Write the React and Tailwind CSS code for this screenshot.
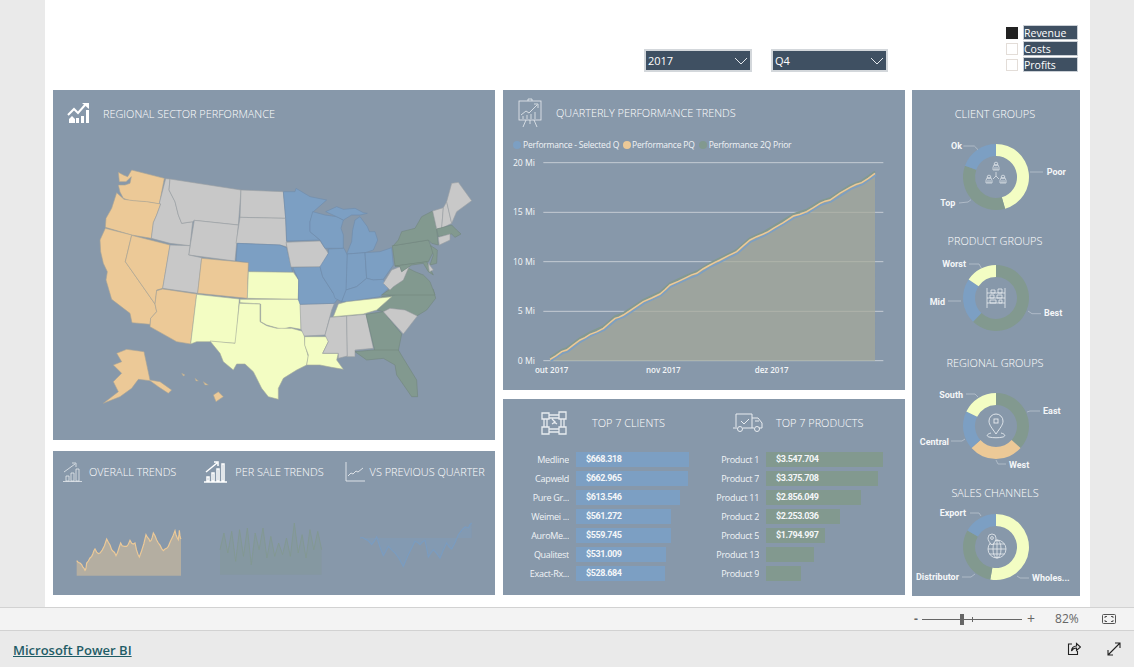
const PANEL = 'bg-[#8798AA]'
const C = { orange: '#ECC997', gray: '#C8C8C8', blue: '#7C9FC3', green: '#82998F', yellow: '#F3FDC3' }
const EDGE = { orange: '#A9A595', gray: '#9A9FA3', blue: '#6E8CAB', green: '#72877D', yellow: '#A6AD9C' }

// map outlines, in 3x coordinates taken off the reference
const STATES = [
  ['orange', '355,277 372,286 383,290 395,270 493,295 478,372 450,367 390,362 370,355 360,336 355,315 375,315 390,310 394,290 378,305 358,305'],
  ['orange', '350,338 372,358 400,362 440,365 482,372 470,405 460,428 454,475 395,465 316,442 318,415 335,385'],
  ['orange', '316,445 395,465 376,545 465,672 470,695 452,715 450,733 396,728 390,700 335,658 318,600 322,575 310,550 302,515 300,480'],
  ['orange', '395,466 510,495 488,625 470,630 465,672 376,545'],
  ['gray', '497,296 510,297 507,330 525,365 535,405 545,430 578,425 570,497 510,490 454,475 460,428 470,405 482,372 478,370'],
  ['gray', '510,297 723,330 715,435 583,421 578,425 545,430 535,405 525,365 507,330'],
  ['gray', '583,421 715,435 705,543 566,525'],
  ['gray', '723,330 850,335 857,415 720,412'],
  ['gray', '720,412 857,415 860,500 840,495 708,490'],
  ['blue', '712,490 840,495 860,503 878,577 745,575 745,548 708,543'],
  ['gray', '510,495 570,497 566,525 605,533 593,640 488,625'],
  ['orange', '605,535 745,548 742,655 593,640'],
  ['orange', '488,627 590,642 572,792 530,785 450,740 452,715 470,695 465,672 470,632'],
  ['yellow', '590,643 718,657 708,790 632,785 590,785 572,792'],
  ['yellow', '745,575 880,577 896,600 895,658 742,655'],
  ['yellow', '720,658 895,658 903,672 903,748 870,742 845,748 800,735 782,725 782,672 720,668'],
  ['yellow', '630,783 705,790 718,670 780,672 780,725 800,737 830,745 875,745 912,755 915,795 925,830 920,855 890,870 850,895 835,925 835,958 805,950 785,925 760,875 735,852 710,852 700,870 670,845 660,820'],
  ['yellow', '914,770 983,770 985,785 968,820 1015,820 1010,840 1030,868 995,862 960,855 920,855 925,825 914,795'],
  ['gray', '900,673 1003,670 995,690 975,765 913,768 903,748'],
  ['blue', '878,562 960,560 968,590 1000,640 1015,655 1003,670 900,673 895,658 896,600'],
  ['gray', '858,487 960,483 985,520 970,555 960,560 873,561'],
  ['blue', '850,335 885,335 888,325 930,350 980,360 940,395 930,425 930,455 960,480 860,483 857,415'],
  ['blue', '930,425 938,395 975,405 1010,410 1030,420 1023,445 1030,465 1030,505 975,505 960,480 930,455'],
  ['blue', '977,395 1010,380 1030,388 1065,385 1090,398 1102,400 1080,405 1055,405 1030,420 1010,410'],
  ['blue', '1058,450 1065,420 1080,410 1102,440 1108,455 1125,455 1133,480 1120,510 1095,518 1040,522 1055,485'],
  ['blue', '985,507 1032,505 1042,525 1040,630 1025,665 1005,655 1000,640 968,590 960,560 985,520'],
  ['blue', '1042,522 1095,518 1100,595 1070,620 1038,630'],
  ['blue', '1095,518 1140,515 1175,503 1180,555 1150,598 1120,600 1100,595'],
  ['blue', '1038,630 1070,620 1100,595 1120,600 1150,598 1165,625 1140,650 1040,665 1025,665'],
  ['gray', '990,712 1040,708 1042,828 1015,835 1015,820 968,820 985,785 975,765'],
  ['gray', '1040,708 1098,703 1120,805 1065,810 1065,830 1042,830'],
  ['green', '1098,703 1150,695 1205,762 1195,812 1125,815'],
  ['green', '1065,815 1120,810 1195,810 1210,835 1250,900 1253,950 1235,950 1190,885 1185,855 1150,835 1100,840'],
  ['green', '1145,650 1300,628 1307,655 1280,690 1250,708 1215,690 1170,685 1150,695 1130,690'],
  ['gray', '1150,695 1170,685 1215,690 1252,708 1210,762'],
  ['green', '1145,645 1180,620 1210,600 1225,565 1245,575 1270,585 1290,605 1305,645'],
  ['gray', '1150,610 1175,570 1200,560 1205,575 1230,555 1225,565 1210,600 1180,620 1170,630'],
  ['green', '1177,497 1285,480 1300,515 1285,545 1185,558'],
  ['green', '1180,497 1195,480 1205,455 1245,445 1265,410 1298,393 1310,447 1315,495 1295,490 1285,480'],
  ['green', '1292,497 1312,510 1310,550 1290,555 1300,525'],
  ['green', '1185,558 1280,545 1300,585 1285,575 1270,550 1235,555 1205,575 1200,560'],
  ['gray', '1285,550 1300,570 1288,575'],
  ['gray', '1298,393 1330,383 1325,445 1310,447'],
  ['gray', '1330,383 1340,365 1355,430 1325,445'],
  ['gray', '1355,310 1375,307 1415,362 1370,395 1355,430 1340,365'],
  ['green', '1310,447 1355,435 1370,450 1383,462 1365,472 1355,462 1315,470'],
  ['gray', '1315,472 1350,462 1350,480 1318,495'],
  ['yellow', '1040,665 1175,650 1130,690 1090,702 1000,710 1015,672'],
  ['orange', '350,820 380,808 432,815 450,900 480,905 515,930 505,940 475,920 450,902 415,898 395,925 360,950 310,970 355,935 340,905 350,895 365,880 340,855 365,845'],
  ['orange', '640,945 655,935 670,950 648,965'],
  ['orange', '545,880 555,885 550,888'],
  ['orange', '585,895 595,903 588,903'],
  ['orange', '610,905 625,915 615,915'],
]

const CLIENTS = [['Medline', '$668.318', 113], ['Capweld', '$662.965', 112], ['Pure Gr...', '$613.546', 104], ['Weimei ...', '$561.272', 95], ['AuroMe...', '$559.745', 95], ['Qualitest', '$531.009', 90], ['Exact-Rx...', '$528.684', 89]]
const PRODUCTS = [['Product 1', '$3.547.704', 117], ['Product 7', '$3.375.708', 112], ['Product 11', '$2.856.049', 95], ['Product 2', '$2.253.036', 74], ['Product 5', '$1.794.997', 59], ['Product 13', '', 48], ['Product 9', '', 35]]

const LINE = [[150,628],[185,605],[200,600],[240,570],[270,553],[310,535],[345,505],[370,495],[430,455],[480,432],[510,405],[560,382],[590,370],[630,345],[660,330],[710,305],[750,270],[790,252],[820,235],[880,198],[920,185],[960,160],[990,150],[1050,112],[1085,98],[1125,70]]
const ORANGE_SPARK = [[80,333],[95,345],[105,362],[110,340],[125,320],[135,298],[150,310],[170,268],[185,300],[198,318],[212,280],[225,290],[240,272],[255,280],[268,322],[288,255],[300,275],[310,250],[325,280],[340,303],[355,290],[375,243],[385,270],[388,242],[393,268]]
const BLUE_SPARK = [[930,265],[945,268],[965,285],[980,262],[1000,318],[1015,290],[1035,310],[1060,350],[1075,315],[1095,275],[1110,285],[1125,272],[1135,322],[1150,300],[1170,325],[1190,280],[1205,298],[1225,255],[1245,232],[1255,235],[1265,220]]
const GREEN_TOPS = [300,250,310,245,335,240,320,235,345,250,300,235,325,260,320,280,315,265,320,220,310,255,325,240,300,245,300]
const GREEN_SPARK = GREEN_TOPS.map((y, i) => [510 + (i * 305) / (GREEN_TOPS.length - 1), y])

const pts = (list, dx = 0, dy = 0) => list.map(([x, y]) => `${x + dx},${y + dy}`).join(' ')

// adds small steps between hand-picked points so the lines aren't too clean
function rough(list, steps, amp) {
  const out = []
  list.slice(0, -1).forEach(([x, y], i) => {
    const [nx, ny] = list[i + 1]
    for (let s = 0; s < steps; s++) {
      const t = s / steps
      const wob = s === 0 ? 0 : Math.sin((x + s) * 12.9898) * amp
      out.push([x + (nx - x) * t, y + (ny - y) * t + wob])
    }
  })
  out.push(list[list.length - 1])
  return out
}

const ORANGE_ROUGH = rough(ORANGE_SPARK, 3, 6)
const BLUE_ROUGH = rough(BLUE_SPARK, 2, 3)
const LINE_ROUGH = rough(LINE, 2, 1.5)

function arc(from, to, r1 = 33, r2 = 21) {
  const p = (a, r) => {
    const t = ((a - 90) * Math.PI) / 180
    return `${(r * Math.cos(t)).toFixed(2)} ${(r * Math.sin(t)).toFixed(2)}`
  }
  const big = to - from > 180 ? 1 : 0
  return `M${p(from, r1)}A${r1} ${r1} 0 ${big} 1 ${p(to, r1)}L${p(to, r2)}A${r2} ${r2} 0 ${big} 0 ${p(from, r2)}Z`
}

const PersonIcon = ({ x, y }) => (
  <g transform={`translate(${x} ${y})`}>
    <circle cx="0" cy="-3" r="1.8" />
    <path d="M-3 3v-2.5a3 3 0 0 1 6 0V3zM-1 3V0M1 3V0" />
  </g>
)

const CENTER_ICONS = {
  people: (
    <g fill="none" stroke="#E8ECF0" strokeWidth="0.7">
      <PersonIcon x={0} y={-10} />
      <PersonIcon x={-7} y={3} />
      <PersonIcon x={7} y={3} />
      <path d="M0 -5V-1L-3 2M0 -1L3 2" />
    </g>
  ),
  shelf: (
    <g fill="none" stroke="#E8ECF0" strokeWidth="0.8">
      <path d="M-9 -10V10M9 -10V10M-9 -5H9M-9 0H9M-9 5H9M-5 -8H-1V-5H-5zM1 -3H6V0H1zM-6 2H0V5H-6zM3 2H6V5H3zM2 -9H6V-5H2zM-6 -3H-2V0H-6z" />
    </g>
  ),
  pin: (
    <g fill="none" stroke="#E8ECF0" strokeWidth="0.9">
      <path d="M0 8C-4 2 -7 -1 -7 -5A7 7 0 0 1 7 -5C7 -1 4 2 0 8Z" />
      <rect x="-2" y="-7" width="4" height="4" />
      <path d="M-5 7C-9 8 -10 10 -7 11C-3 12 3 12 7 11C10 10 9 8 5 7" />
    </g>
  ),
  globe: (
    <g fill="none" stroke="#E8ECF0" strokeWidth="0.8">
      <circle cx="1" cy="2" r="9" />
      <ellipse cx="1" cy="2" rx="4" ry="9" />
      <path d="M-8 2H10M-6.5 -3H8.5M-6.5 7H8.5M1 -7V11" />
      <path d="M-4 -2C-7 -5 -8 -7 -8 -9A4 4 0 0 1 0 -9C0 -7 -1 -5 -4 -2Z" fill="#8798AA" />
      <circle cx="-4" cy="-9" r="1.4" />
    </g>
  ),
}

const DONUTS = [
  {
    title: 'CLIENT GROUPS', icon: 'people', wrap: 'mt-0', svg: 'mt-[13px]',
    segs: [[0, 164, 'yellow'], [164, 290, 'green'], [290, 360, 'blue']],
    labels: [
      ['Ok', -34, -31, 'end', '-32.7,-31 -21.7,-31 -18,-27.3'],
      ['Poor', 50.7, -5, 'start', '34,-5 47,-5'],
      ['Top', -40.7, 26, 'end', '-37,26 -28,25 -25,22.7'],
    ],
  },
  {
    title: 'PRODUCT GROUPS', icon: 'shelf', wrap: 'mt-[14px]', svg: 'mt-[7px]',
    segs: [[0, 224, 'green'], [224, 304, 'blue'], [304, 360, 'yellow']],
    labels: [
      ['Worst', -30, -34, 'end', '-27,-34 -17,-34 -14.7,-30'],
      ['Mid', -51, 3.7, 'end', '-48,3 -35,3'],
      ['Best', 48, 15, 'start', '32,13 36,15.7 45,15.7'],
    ],
  },
  {
    title: 'REGIONAL GROUPS', icon: 'pin', wrap: 'mt-[15px]', svg: 'mt-[13px]',
    segs: [[0, 132, 'green'], [132, 228, 'orange'], [228, 296, 'blue'], [296, 360, 'yellow']],
    labels: [
      ['South', -33, -31, 'end', '-30,-32 -21,-32 -18,-29'],
      ['East', 47, -15, 'start', '31,-14 34,-15 44,-15'],
      ['Central', -47, 16, 'end', '-45,15 -34,15 -31,13'],
      ['West', 13, 39, 'start', '0,34 2,38 10,38'],
    ],
  },
  {
    title: 'SALES CHANNELS', icon: 'globe', wrap: 'mt-[17px]', svg: 'mt-[4px]',
    segs: [[0, 190, 'yellow'], [190, 300, 'green'], [300, 360, 'blue']],
    labels: [
      ['Export', -30, -34, 'end', '-26,-34 -17,-34 -15,-31'],
      ['Distributor', -37, 30, 'end', '-34,30 -25,30 -21,27'],
      ['Wholes...', 36, 31, 'start', '21,29 24,31 33,31'],
    ],
  },
]

function Donut({ d }) {
  return (
    <div className={d.wrap}>
      <div className="flex h-5 items-center justify-center pr-[2px] text-[10.9px] font-light text-white">{d.title}</div>
      <svg viewBox="-84 -40 168 80" className={`block h-20 w-[168px] overflow-visible ${d.svg}`}>
        {d.segs.map(([a, b, c]) => (
          <path key={a} d={arc(a, b)} fill={C[c]} />
        ))}
        {d.labels.map(([t, x, y, anchor, line]) => (
          <g key={t}>
            <polyline points={line} fill="none" stroke="#B9C3CE" strokeWidth="0.8" />
            <text x={x} y={y + 3.2} textAnchor={anchor} fontSize="9" fontWeight="700" fill="#F4F6F8" fontFamily="Roboto, sans-serif">
              {t}
            </text>
          </g>
        ))}
        {CENTER_ICONS[d.icon]}
      </svg>
    </div>
  )
}

function BarRow({ label, value, width, labelClass, barClass }) {
  return (
    <div className="flex h-[19px] items-center gap-[7px]">
      <div className={`truncate text-right text-[9px] tracking-[-0.3px] text-[#F0F3F6] ${labelClass}`}>{label}</div>
      <div className={`flex h-[15px] items-center pl-[10px] ${barClass}`} style={{ width }}>
        <span className="font-['Roboto',sans-serif] text-[9px] font-bold tracking-[-0.4px] text-[#F4F6F8]">{value}</span>
      </div>
    </div>
  )
}

export default function App() {
  return (
    <div className="flex h-[667px] w-[1134px] flex-col overflow-hidden bg-[#EAEAEA] font-['Open_Sans',sans-serif]">
      <div className="ml-[45px] h-[607px] w-[1045px] bg-white pl-[8px]">
        {/* slicers */}
        <div className="relative flex h-[90px]">
          <div className="ml-[591px] mt-[49px] flex h-[23px] w-[108px] items-center justify-between border-2 border-[#D3D7DB] bg-[#3F5062] pl-[2px] pr-[1px] pt-[1px] text-[11px] text-white">
            2017
            <svg width="16" height="10" viewBox="0 0 16 10" fill="none" stroke="#E6EAEE" strokeWidth="1"><path d="M2 2l6 6 6-6" /></svg>
          </div>
          <div className="ml-[19px] mt-[49px] flex h-[23px] w-[117px] items-center justify-between border-2 border-[#D3D7DB] bg-[#3F5062] pl-[2px] pr-[1px] pt-[1px] text-[11px] text-white">
            Q4
            <svg width="16" height="10" viewBox="0 0 16 10" fill="none" stroke="#E6EAEE" strokeWidth="1"><path d="M2 2l6 6 6-6" /></svg>
          </div>
          <div className="ml-[118px] mt-[25px] flex w-[73px] flex-col gap-px">
            {['Revenue', 'Costs', 'Profits'].map((t, i) => (
              <div key={t} className="flex h-[15px] items-center gap-[5px]">
                <span className={`h-3 w-3 border ${i === 0 ? 'border-[#222222] bg-[#222222]' : 'border-[#E3DDD8] bg-white'}`} />
                <span className="flex h-[15px] w-[55px] items-center border border-[#CBD0D6] bg-[#3F5062] pt-[2px] text-[10.5px] leading-none text-white">{t}</span>
              </div>
            ))}
          </div>
        </div>

        <div className="flex">
          {/* left column */}
          <div className="mr-[8px] flex w-[442px] flex-col gap-[11px]">
            <div className={`h-[350px] ${PANEL}`}>
              <div className="flex h-[70px] items-start pl-[14px] pt-[12px]">
                <svg width="24" height="22" viewBox="0 0 24 22" className="shrink-0">
                  <g fill="#FFFFFF">
                    <path d="M2 21v-4l3-3 3 3v4zM9 21v-5h3v5zM14 21v-7h3v7zM19 21V8h3v13z" />
                  </g>
                  <path d="M1 13l6-6 4 4 7-8" fill="none" stroke="#FFFFFF" strokeWidth="2" />
                  <path d="M15 1h7v6z" fill="#FFFFFF" />
                </svg>
                <span className="ml-[12px] mt-[4px] text-[10.9px] font-light text-white">REGIONAL SECTOR PERFORMANCE</span>
              </div>
              <svg viewBox="240 240 1200 780" className="ml-[27px] block h-[260px] w-[400px]">
                {STATES.map(([c, p], i) => (
                  <polygon key={i} points={p} fill={C[c]} stroke={EDGE[c]} strokeWidth="1.8" strokeLinejoin="round" />
                ))}
              </svg>
            </div>
            <div className={`h-[144px] ${PANEL}`}>
              <div className="flex h-[42px] items-center whitespace-nowrap text-[10.9px] font-light text-white">
                <svg width="20" height="22" viewBox="0 0 20 22" fill="none" stroke="#E6EAEE" strokeWidth="0.8" className="ml-[10px] shrink-0">
                  <path d="M0 20.500h19M3 20v-5h3v5zM8 20v-8h3v8zM13 20V8h3v12zM1 11L12 3M9 2h4v4" />
                </svg>
                <span className="ml-[6px]">OVERALL TRENDS</span>
                <svg width="23" height="22" viewBox="0 0 23 22" fill="none" stroke="#FFFFFF" strokeWidth="1.5" className="ml-[28px] shrink-0">
                  <path d="M0 21h23M3 20v-4h2v4zM8 20v-8h2v8zM13 20V8h2v12zM18 20V3h2v17zM2 11L13 2M10 1h4v4" />
                </svg>
                <span className="ml-[8px]">PER SALE TRENDS</span>
                <svg width="20" height="20" viewBox="0 0 20 20" fill="none" stroke="#E6EAEE" strokeWidth="0.9" className="ml-[21px] shrink-0">
                  <path d="M1 0v19h19M3 14l3-3 2 1 3-3 2 1 5-4" />
                </svg>
                <span className="ml-[5px]">VS PREVIOUS QUARTER</span>
              </div>
              <svg viewBox="9 130 1326 306" className="block h-[102px] w-[442px]">
                <polygon points={`80,378 ${pts(ORANGE_ROUGH)} 393,378`} fill={C.orange} fillOpacity="0.45" />
                <polyline points={pts(ORANGE_ROUGH)} fill="none" stroke={C.orange} strokeWidth="3.5" />
                <polygon points={`510,375 ${pts(GREEN_SPARK)} 815,375`} fill={C.green} fillOpacity="0.3" />
                <polyline points={pts(GREEN_SPARK)} fill="none" stroke={C.green} strokeOpacity="0.8" strokeWidth="3" />
                <polygon points={`930,265 ${pts(BLUE_ROUGH)} 1265,265`} fill={C.blue} fillOpacity="0.35" />
                <polyline points={pts(BLUE_ROUGH)} fill="none" stroke="#7A9CC0" strokeWidth="3.5" />
              </svg>
            </div>
          </div>

          {/* middle column */}
          <div className="mr-[7px] flex w-[402px] flex-col gap-[9px]">
            <div className={`h-[300px] ${PANEL}`}>
              <div className="flex h-[46px] items-center pl-[15px]">
                <svg width="24" height="30" viewBox="0 0 24 30" fill="none" stroke="#E8ECF0" strokeWidth="0.8">
                  <rect x="1" y="3" width="22" height="19" />
                  <path d="M10 3V1h4v2M8 22l-3 7M16 22l3 7M12 22v4M3 17l5-4 3 2 8-8M16 6h4v4M5 21v-3M9 21v-4M13 21v-5M17 21v-7" />
                </svg>
                <span className="ml-[14px] text-[10.9px] font-light text-white">QUARTERLY PERFORMANCE TRENDS</span>
              </div>
              <div className="flex h-[14px] items-center pl-[10px] pt-[4px] text-[8.5px] tracking-[-0.2px] text-[#F0F3F6]">
                <span className="h-2 w-2 rounded-full bg-[#7C9FC3]" />
                <span className="ml-[2px]">Performance - Selected Q</span>
                <span className="ml-[4px] h-2 w-2 rounded-full bg-[#ECC997]" />
                <span className="ml-px">Performance PQ</span>
                <span className="ml-[4px] h-2 w-2 rounded-full bg-[#82998F]" />
                <span className="ml-[2px]">Performance 2Q Prior</span>
              </div>
              <svg viewBox="9 0 1206 690" className="block h-[230px] w-[402px]">
                {[['20 Mi', 38], ['15 Mi', 187], ['10 Mi', 335], ['5 Mi', 484], ['0 Mi', 632]].map(([t, y]) => (
                  <g key={t}>
                    <line x1="130" x2="1150" y1={y} y2={y} stroke="#C4CBD3" strokeWidth="3" />
                    <text x="105" y={y + 9} textAnchor="end" fontSize="26" fill="#F4F6F8" fontFamily="Open Sans, sans-serif">{t}</text>
                  </g>
                ))}
                <polygon points={`150,632 ${pts(LINE, 0, -6)} 1125,632`} fill={C.green} fillOpacity="0.55" />
                <polygon points={`150,632 ${pts(LINE, 3, 5)} 1125,632`} fill={C.blue} fillOpacity="0.12" />
                <polygon points={`150,632 ${pts(LINE)} 1125,632`} fill={C.orange} fillOpacity="0.25" />
                <polyline points={pts(LINE, 0, -6)} fill="none" stroke={C.green} strokeWidth="5" />
                <polyline points={pts(LINE, 3, 5)} fill="none" stroke={C.blue} strokeWidth="5" />
                <polyline points={pts(LINE_ROUGH)} fill="none" stroke={C.orange} strokeWidth="4.5" />
                {[['out 2017', 155], ['nov 2017', 490], ['dez 2017', 815]].map(([t, x]) => (
                  <text key={t} x={x} y="669" textAnchor="middle" fontSize="24" fontWeight="600" fill="#F4F6F8" fontFamily="Open Sans, sans-serif">{t}</text>
                ))}
              </svg>
            </div>
            <div className={`flex h-[196px] ${PANEL}`}>
              <div className="w-[200px]">
                <div className="flex h-[48px] items-center pl-[37px]">
                  <svg width="28" height="26" viewBox="0 0 28 26" fill="none" stroke="#E8ECF0" strokeWidth="1.3">
                    <path d="M2 3h7v6H2zM19 2h7v7h-7zM2 17h7v7H2zM19 17h7v7h-7zM9 5h10v3H9zM9 19h10v3H9zM4 9v8h3V9zM21 9v8h3V9zM12 9l3 3-3 2M17 14l-3-2" />
                  </svg>
                  <span className="ml-[24px] text-[10.9px] font-light text-white">TOP 7 CLIENTS</span>
                </div>
                <div className="mt-[3px]">
                  {CLIENTS.map(([l, v, w]) => (
                    <BarRow key={l} label={l} value={v} width={w} labelClass="w-[66px]" barClass="bg-[#7C9FC3]" />
                  ))}
                </div>
              </div>
              <div className="flex-1">
                <div className="flex h-[48px] items-center pl-[30px]">
                  <svg width="30" height="20" viewBox="0 0 30 20" fill="none" stroke="#E8ECF0" strokeWidth="1">
                    <path d="M3 14V1h16v14M19 5h6l4 5v5h-3M0 15h4M10 15h11M8 8l3 3 5-5M22 8h4" />
                    <circle cx="7" cy="16" r="2.5" />
                    <circle cx="24" cy="16" r="2.5" />
                  </svg>
                  <span className="ml-[13px] text-[10.9px] font-light text-white">TOP 7 PRODUCTS</span>
                </div>
                <div className="mt-[3px]">
                  {PRODUCTS.map(([l, v, w]) => (
                    <BarRow key={l} label={l} value={v} width={w} labelClass="w-[56px]" barClass="bg-[#82998F]" />
                  ))}
                </div>
              </div>
            </div>
          </div>

          {/* right column */}
          <div className={`h-[506px] w-[168px] pt-[14px] ${PANEL}`}>
            {DONUTS.map((d) => (
              <Donut key={d.title} d={d} />
            ))}
          </div>
        </div>
      </div>

      {/* zoom bar */}
      <div className="flex h-[24px] items-center border-y border-[#D2D2D2] bg-[#F3F3F3] text-[12px] text-[#666666]">
        <span className="ml-[913px] w-[6px] text-center font-bold leading-none">-</span>
        <div className="relative ml-[3px] h-px w-[100px] bg-[#666666]">
          <span className="absolute left-[38px] top-[-5px] h-[11px] w-[4px] bg-[#666666]" />
          <span className="absolute left-[50px] top-[-2px] h-[5px] w-px bg-[#666666]" />
        </div>
        <span className="ml-[5px] text-[14px] leading-none">+</span>
        <span className="ml-[20px]">82%</span>
        <svg width="14" height="10" viewBox="0 0 14 10" fill="none" stroke="#555555" className="ml-[23px]">
          <rect x="0.5" y="0.5" width="13" height="9" rx="1" />
          <path d="M3 4V2.500h2M11 4V2.500H9M3 6v1.500h2M11 6v1.500H9" />
        </svg>
      </div>

      {/* footer */}
      <div className="flex flex-1 items-center pl-[13px] pt-[3px]">
        <a className="text-[13px] font-semibold text-[#1F5C66] underline">Microsoft Power BI</a>
        <svg width="14" height="14" viewBox="0 0 14 14" fill="none" stroke="#222222" strokeWidth="1.1" className="ml-[935px] mb-[3px]">
          <path d="M5 2H1.500v10.500h9V9M4.500 9c0-3 2-5 5-5V1.500L13.500 5 9.500 8.500V6C7 6 5.500 7 4.500 9z" />
        </svg>
        <svg width="14" height="14" viewBox="0 0 14 14" fill="none" stroke="#222222" strokeWidth="1.1" className="ml-[26px] mb-[3px]">
          <path d="M1 13L13 1M8 1h5v5M1 8v5h5" />
        </svg>
      </div>
    </div>
  )
}
